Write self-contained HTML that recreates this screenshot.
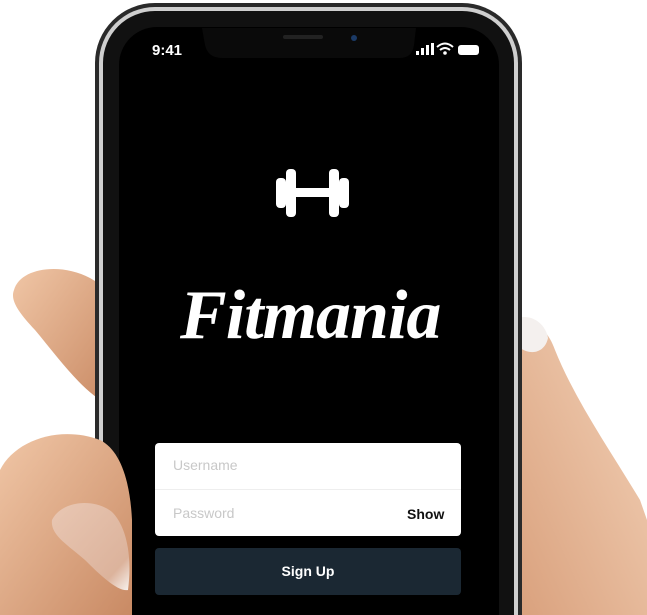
<!DOCTYPE html>
<html><head><style>
html,body{margin:0;width:647px;height:615px;overflow:hidden}
body{background:#fff;position:relative;font-family:"Liberation Sans",sans-serif}
svg{position:absolute;left:0;top:0}
.t{position:absolute;font-family:"Liberation Sans",sans-serif}
</style></head><body>
<svg width="647" height="615" viewBox="0 0 647 615">
<defs>
<linearGradient id="sk" x1="0" y1="0" x2="1" y2="1"><stop offset="0" stop-color="#f0c6a6"/><stop offset="1" stop-color="#c98a64"/></linearGradient>
<linearGradient id="sk2" x1="1" y1="0" x2="0" y2="1"><stop offset="0" stop-color="#f3d2b8"/><stop offset="1" stop-color="#d9a07c"/></linearGradient>
<linearGradient id="nl" x1="0" y1="0" x2="1" y2="1"><stop offset="0" stop-color="#e9c7b3"/><stop offset="0.8" stop-color="#dcb39c"/><stop offset="1" stop-color="#f7f2ee"/></linearGradient>
</defs>
<path d="M515 325 C535 318 548 330 555 350 C575 400 610 450 640 500 L647 520 L647 615 L515 615 Z" fill="url(#sk2)"/>
<path d="M518 318 C530 314 545 322 548 338 C545 352 532 356 520 348 Z" fill="#f4f0ee"/>
<path d="M14 290 C20 268 60 262 90 278 L110 290 L110 405 C85 395 60 360 35 330 C18 312 10 300 14 290 Z" fill="url(#sk)"/>
<rect x="95" y="3" width="427" height="700" rx="60" fill="#2a2a2a"/>
<rect x="99" y="7" width="419" height="700" rx="56" fill="#cfcfcf"/>
<rect x="103" y="11" width="411" height="700" rx="52" fill="#111"/>
<rect x="119" y="27" width="380" height="700" rx="38" fill="#000"/>
<path d="M202 28 L205 45 Q208 58 222 58 L400 58 Q412 58 414 45 L416 28 Z" fill="#0a0a0a"/>
<rect x="283" y="35" width="40" height="4" rx="2" fill="#222"/>
<circle cx="354" cy="38" r="3" fill="#1b3a66"/>
<rect x="416" y="51" width="3" height="4" fill="#fff"/><rect x="421" y="48" width="3" height="7" fill="#fff"/><rect x="426" y="45" width="3" height="10" fill="#fff"/><rect x="431" y="43" width="3" height="12" fill="#fff"/>
<path d="M437 47 Q445 40 453 47 M440 50 Q445 46 450 50" stroke="#fff" stroke-width="2" fill="none"/><circle cx="445" cy="53" r="1.8" fill="#fff"/>
<rect x="458" y="45" width="21" height="10" rx="3" fill="#fff"/>
<g fill="#fff">
<rect x="276" y="178" width="10" height="30" rx="4"/><rect x="286" y="169" width="10" height="48" rx="4"/>
<rect x="295" y="188" width="35" height="9"/>
<rect x="329" y="169" width="10" height="48" rx="4"/><rect x="339" y="178" width="10" height="30" rx="4"/>
</g>
<path d="M0 470 C15 440 60 425 100 440 C120 450 130 480 132 520 L132 615 L0 615 Z" fill="url(#sk)"/>
<path d="M52 520 C62 500 95 498 112 512 C128 528 132 560 128 590 C118 592 100 575 85 560 C68 545 50 535 52 520 Z" fill="url(#nl)"/>
<rect x="155" y="443" width="306" height="93" rx="4" fill="#fff"/>
<rect x="155" y="489" width="306" height="1" fill="#eee"/>
<rect x="155" y="548" width="306" height="47" rx="4" fill="#1b2833"/>
</svg>
<div class="t" style="left:152px;top:42px;color:#fff;font-size:15px;font-weight:bold">9:41</div>
<div class="t" style="left:180px;top:280px;color:#fff;font-family:'Liberation Serif',serif;font-style:italic;font-weight:bold;font-size:70px;line-height:72px;letter-spacing:-1px">Fitmania</div>
<div class="t" style="left:173px;top:457px;color:#c8c8c8;font-size:14px">Username</div>
<div class="t" style="left:173px;top:505px;color:#c8c8c8;font-size:14px">Password</div>
<div class="t" style="left:407px;top:506px;color:#111;font-size:14px;font-weight:bold">Show</div>
<div class="t" style="left:155px;width:306px;text-align:center;top:563px;color:#fff;font-size:14px;font-weight:bold">Sign Up</div>
</body></html>
